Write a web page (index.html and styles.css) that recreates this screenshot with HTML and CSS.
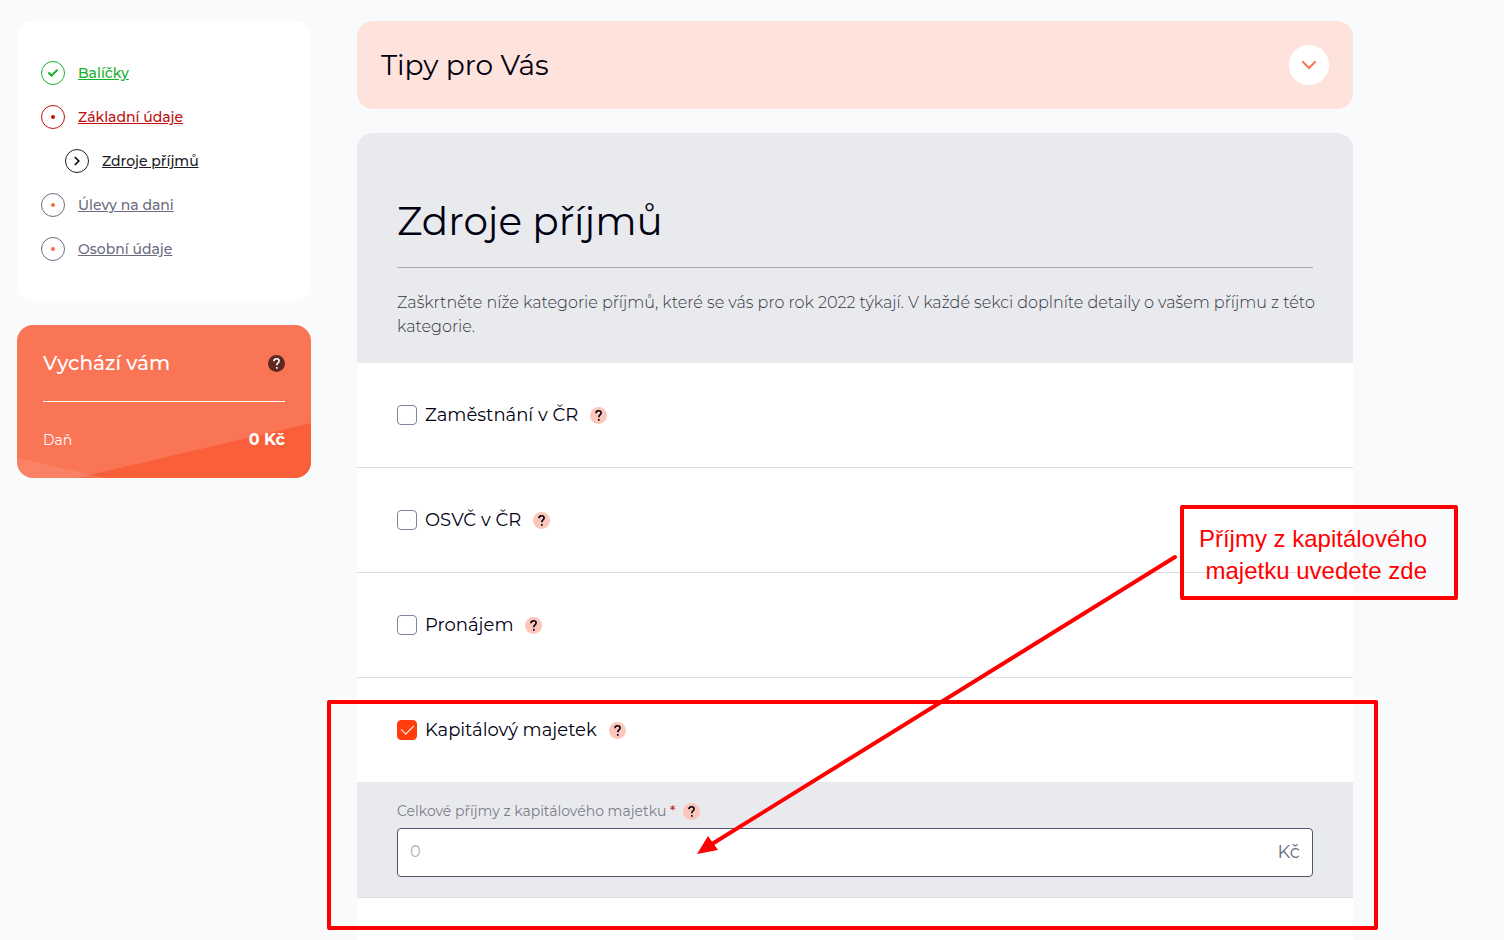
FILE: index.html
```html
<!DOCTYPE html>
<html lang="cs">
<head>
    <meta charset="UTF-8">
    <meta name="viewport" content="width=device-width, initial-scale=1.0">
    <title>Zdroje příjmů</title>
    <link rel="stylesheet" href="styles.css">
</head>
<body>
    <div class="page">
        <aside class="sidebar">
            <nav class="steps">
                <a href="#balicky" class="step done">
                    <svg class="step-icon" viewBox="0 0 24 24"><circle cx="12" cy="12" r="11.5"/><path d="M7.3 11.6l3.2 3 6-5.8"/></svg>
                    <span>Balíčky</span>
                </a>
                <a href="#zakladni" class="step error">
                    <svg class="step-icon" viewBox="0 0 24 24"><circle cx="12" cy="12" r="11.5"/><circle class="dot" cx="12" cy="12" r="2"/></svg>
                    <span>Základní údaje</span>
                </a>
                <a href="#zdroje" class="step sub">
                    <svg class="step-icon" viewBox="0 0 24 24"><circle cx="12" cy="12" r="11.5"/><path d="M9.8 8l4 4-4 4"/></svg>
                    <span>Zdroje příjmů</span>
                </a>
                <a href="#ulevy" class="step">
                    <svg class="step-icon" viewBox="0 0 24 24"><circle cx="12" cy="12" r="11.5"/><circle class="dot" cx="12" cy="12" r="2"/></svg>
                    <span>Úlevy na dani</span>
                </a>
                <a href="#osobni" class="step">
                    <svg class="step-icon" viewBox="0 0 24 24"><circle cx="12" cy="12" r="11.5"/><circle class="dot" cx="12" cy="12" r="2"/></svg>
                    <span>Osobní údaje</span>
                </a>
            </nav>

            <section class="result">
                <svg class="result-bg" viewBox="0 0 294 153" preserveAspectRatio="none">
                    <path fill="#f9603a" d="M60 153L294 98v55z"/>
                    <path fill="#fff" fill-opacity=".1" d="M0 133l88 20H0z"/>
                </svg>
                <div class="result-head">
                    <h2>Vychází vám</h2>
                    <button type="button" class="help dark" aria-label="Nápověda"><svg viewBox="0 0 17 17"><path d="M6 6.2c0-1.6 1.1-2.5 2.6-2.5s2.5.9 2.5 2.2c0 2.1-2.3 2-2.3 4.3"/><path d="M8.8 12v1.8"/></svg></button>
                </div>
                <div class="result-row">
                    <span>Daň</span>
                    <strong>0 Kč</strong>
                </div>
            </section>
        </aside>

        <main class="content">
            <section class="tips">
                <h2>Tipy pro Vás</h2>
                <button type="button" class="toggle" aria-label="Rozbalit"><svg viewBox="0 0 40 40"><path d="M13.3 16.3l6.7 6.7 6.7-6.7"/></svg></button>
            </section>

            <form class="panel">
                <header class="panel-head">
                    <h1>Zdroje příjmů</h1>
                    <p>Zaškrtněte níže kategorie příjmů, které se vás pro rok 2022 týkají. V každé sekci doplníte detaily o vašem příjmu z této kategorie.</p>
                </header>

                <div class="option">
                    <input type="checkbox" id="zamestnani">
                    <label for="zamestnani">Zaměstnání v ČR</label>
                    <button type="button" class="help" aria-label="Nápověda"><svg viewBox="0 0 17 17"><path d="M6 6.2c0-1.6 1.1-2.5 2.6-2.5s2.5.9 2.5 2.2c0 2.1-2.3 2-2.3 4.3"/><path d="M8.8 12v1.8"/></svg></button>
                </div>
                <div class="option">
                    <input type="checkbox" id="osvc">
                    <label for="osvc">OSVČ v ČR</label>
                    <button type="button" class="help" aria-label="Nápověda"><svg viewBox="0 0 17 17"><path d="M6 6.2c0-1.6 1.1-2.5 2.6-2.5s2.5.9 2.5 2.2c0 2.1-2.3 2-2.3 4.3"/><path d="M8.8 12v1.8"/></svg></button>
                </div>
                <div class="option">
                    <input type="checkbox" id="pronajem">
                    <label for="pronajem">Pronájem</label>
                    <button type="button" class="help" aria-label="Nápověda"><svg viewBox="0 0 17 17"><path d="M6 6.2c0-1.6 1.1-2.5 2.6-2.5s2.5.9 2.5 2.2c0 2.1-2.3 2-2.3 4.3"/><path d="M8.8 12v1.8"/></svg></button>
                </div>

                <div class="group">
                    <div class="option open">
                        <input type="checkbox" id="kapital" checked>
                        <label for="kapital">Kapitálový majetek</label>
                        <button type="button" class="help" aria-label="Nápověda"><svg viewBox="0 0 17 17"><path d="M6 6.2c0-1.6 1.1-2.5 2.6-2.5s2.5.9 2.5 2.2c0 2.1-2.3 2-2.3 4.3"/><path d="M8.8 12v1.8"/></svg></button>
                    </div>
                    <div class="details">
                        <div class="field-label">
                            <label for="prijmy">Celkové příjmy z kapitálového majetku <span class="required">*</span></label>
                            <button type="button" class="help" aria-label="Nápověda"><svg viewBox="0 0 17 17"><path d="M6 6.2c0-1.6 1.1-2.5 2.6-2.5s2.5.9 2.5 2.2c0 2.1-2.3 2-2.3 4.3"/><path d="M8.8 12v1.8"/></svg></button>
                        </div>
                        <div class="field">
                            <input type="text" id="prijmy" placeholder="0" inputmode="numeric">
                            <span class="unit">Kč</span>
                        </div>
                    </div>
                    <div class="highlight"></div>
                </div>

                <svg class="arrow" viewBox="0 0 490 310">
                    <path class="line" d="M483 8L20 295"/>
                    <path class="tip" d="M5 305l11-18 10 14z"/>
                </svg>
                <div class="callout">Příjmy z kapitálového<br>majetku uvedete zde</div>
            </form>
        </main>
    </div>
</body>
</html>
```
FILE: styles.css
```css
* { box-sizing: border-box; }
body { margin: 0; background: #f9fafc; color: #000011; font-family: Montserrat, Inter, sans-serif; font-size: 16px; line-height: 24px; }
h1, h2, p { margin: 0; font-weight: 400; }
button { border: 0; padding: 0; cursor: pointer; }

.page { display: flex; gap: 46px; min-height: 100vh; padding: 21px 151px 0 17px; overflow: hidden; }
.sidebar { width: 294px; flex-shrink: 0; }
.content { flex: 1; display: flex; flex-direction: column; }

/* steps */
.steps { display: flex; flex-direction: column; gap: 20px; padding: 40px 24px; background: #fff; border-radius: 16px; }
.step { display: flex; align-items: center; gap: 13px; color: #6b6b80; font-size: 14px; font-weight: 500; text-decoration: underline; }
.step.done { color: #18b12c; }
.step.error { color: #c00d0d; }
.step.sub { margin-left: 24px; color: #1c1c26; }
.step-icon { width: 24px; height: 24px; fill: none; stroke: currentColor; }
.step-icon path { stroke-width: 2; }
.sub .step-icon path { stroke: #000011; stroke-width: 1.6; }
.step-icon .dot { fill: #fa6b48; stroke: none; }
.error .dot { fill: currentColor; }

/* result */
.result { position: relative; margin-top: 24px; padding: 26px; border-radius: 16px; background: #fa7556; color: #fff; overflow: hidden; }
.result-bg { position: absolute; left: 0; top: 0; width: 100%; height: 100%; }
.result-head, .result-row { position: relative; display: flex; align-items: center; justify-content: space-between; }
.result-head { padding-bottom: 26px; border-bottom: 1px solid #fff; }
.result-head h2 { font-size: 20px; font-weight: 500; }
.result-row { padding-top: 26px; font-size: 14px; }
.result-row strong { font-size: 16px; }

.help { width: 17px; height: 17px; flex-shrink: 0; border-radius: 50%; background: #fdc6ba; color: #000011; }
.help svg { display: block; width: 17px; height: 17px; fill: none; stroke: currentColor; stroke-width: 1.6; }
.help.dark { background: #5e2a20; color: #fff; }

/* tips */
.tips { display: flex; align-items: center; justify-content: space-between; padding: 24px; border-radius: 16px; background: #fee3dc; }
.tips h2 { font-size: 28px; line-height: 40px; }
.toggle { width: 40px; height: 40px; border-radius: 50%; background: #fff; }
.toggle svg { display: block; fill: none; stroke: #fa7556; stroke-width: 2; }

/* panel */
.panel { position: relative; flex: 1; min-height: 807px; margin-top: 24px; border-radius: 16px 16px 0 0; background: #fff; }
.panel-head { padding: 64px 40px 24px; border-radius: 16px 16px 0 0; background: #e9eaee; }
.panel-head h1 { padding-bottom: 22px; border-bottom: 1px solid #a9a9b8; font-size: 39px; line-height: 48px; }
.panel-head p { margin-right: -8px; padding-top: 23px; color: #33333f; font-weight: 300; }

.option { display: flex; align-items: center; height: 105px; padding: 0 40px; border-bottom: 1px solid #dcdce6; }
.option label { margin: 0 12px 0 8px; font-size: 18px; }
.option input { appearance: none; width: 20px; height: 20px; margin: 0; border: 1px solid #82829a; border-radius: 4px; background: #fff; }
.option input:checked { border-color: #ff3c0a; background: #ff3c0a; }
.option input:checked::before { content: ""; display: block; width: 6px; height: 11px; margin: 1px auto; border: solid #fff; border-width: 0 1px 1px 0; transform: rotate(45deg); }

.group { position: relative; }
.open { border-bottom-color: #e9eaee; }
.details { padding: 16px 40px 20px; border-bottom: 1px solid #dcdce2; background: #e9eaee; }
.field-label { display: flex; align-items: center; gap: 8px; margin-bottom: 5px; color: #7c7c88; font-size: 14px; }
.required { color: #c00d0d; }
.field { display: flex; align-items: center; height: 49px; padding: 0 12px 2px; border: 1px solid #55556a; border-radius: 4px; background: #fff; }
.field input { flex: 1; min-width: 0; border: 0; padding: 0; background: none; font: inherit; outline: 0; }
.field input::placeholder { color: #b0b0bf; }
.unit { color: #6b6b80; font-size: 18px; }

/* annotation */
.highlight { position: absolute; top: 22px; right: -25px; bottom: -32px; left: -30px; border: 4px solid #f00; border-radius: 2px; pointer-events: none; }
.arrow { position: absolute; left: 335px; top: 416px; width: 490px; height: 310px; pointer-events: none; }
.arrow .line { stroke: #f00; stroke-width: 4; stroke-linecap: round; }
.arrow .tip { fill: #f00; }
.callout { position: absolute; top: 372px; right: -105px; width: 278px; padding: 14px 27px 9px 12px; border: 4px solid #f00; border-radius: 2px; color: #f00; font: 24px/32px "Liberation Sans", Arial, sans-serif; text-align: right; white-space: nowrap; }
```
